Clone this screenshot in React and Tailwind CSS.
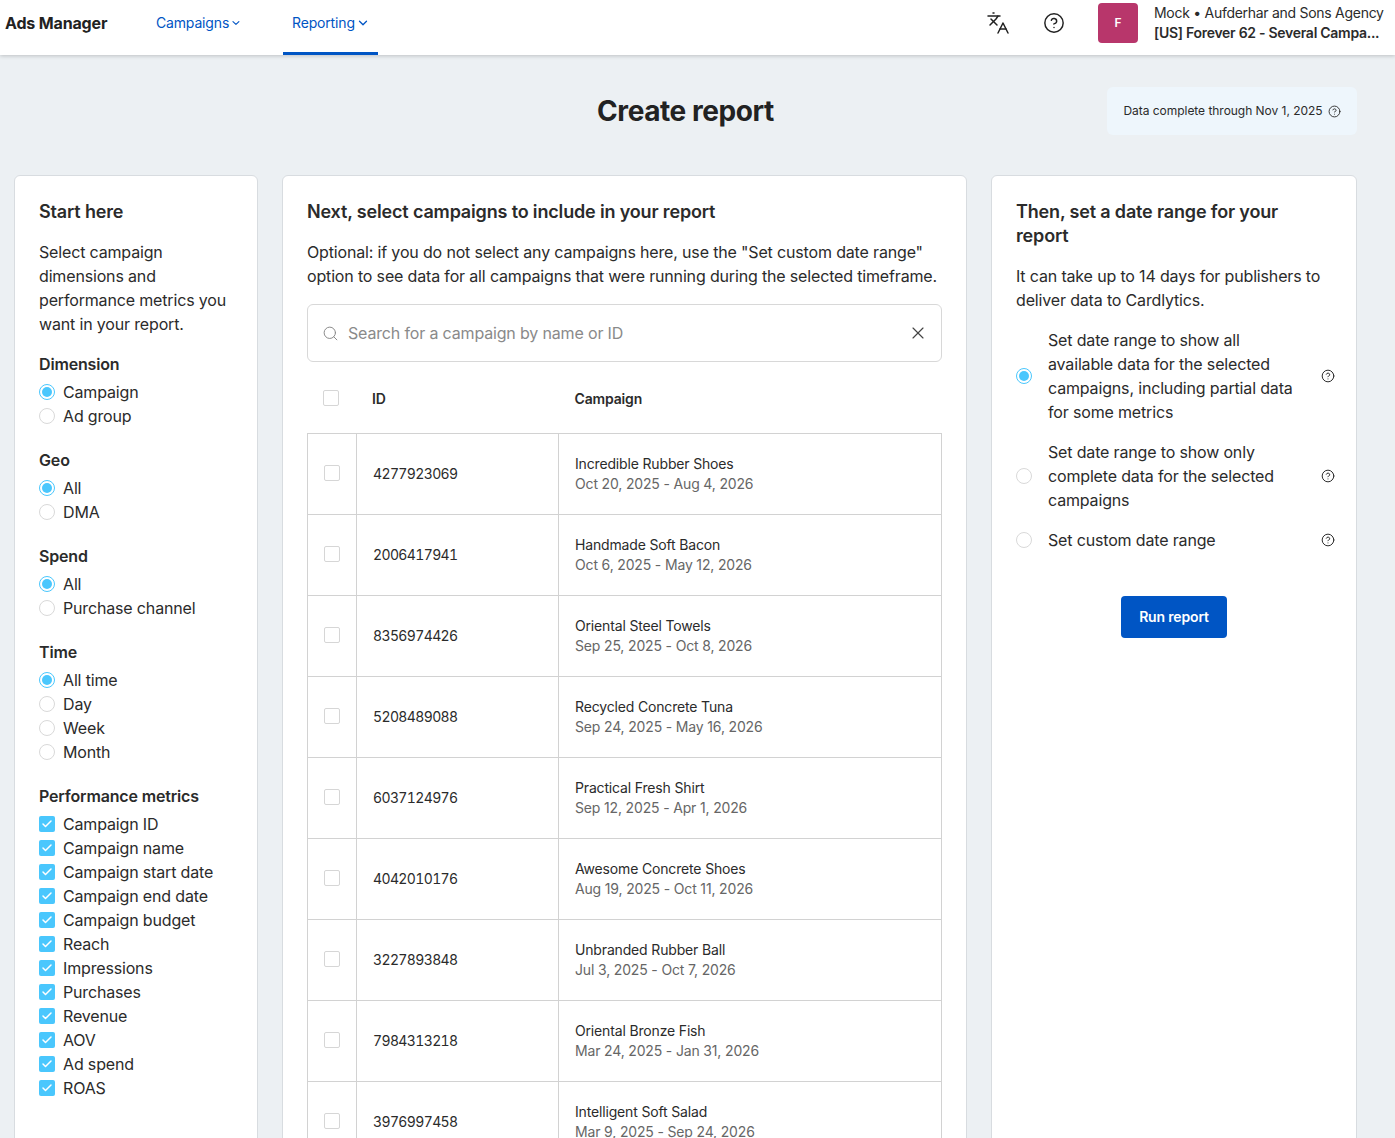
import React from "react";
import { ChevronDown, Languages, CircleHelp, Search, X, Check } from "lucide-react";

const rows = [
  ["4277923069", "Incredible Rubber Shoes", "Oct 20, 2025 - Aug 4, 2026"],
  ["2006417941", "Handmade Soft Bacon", "Oct 6, 2025 - May 12, 2026"],
  ["8356974426", "Oriental Steel Towels", "Sep 25, 2025 - Oct 8, 2026"],
  ["5208489088", "Recycled Concrete Tuna", "Sep 24, 2025 - May 16, 2026"],
  ["6037124976", "Practical Fresh Shirt", "Sep 12, 2025 - Apr 1, 2026"],
  ["4042010176", "Awesome Concrete Shoes", "Aug 19, 2025 - Oct 11, 2026"],
  ["3227893848", "Unbranded Rubber Ball", "Jul 3, 2025 - Oct 7, 2026"],
  ["7984313218", "Oriental Bronze Fish", "Mar 24, 2025 - Jan 31, 2026"],
  ["3976997458", "Intelligent Soft Salad", "Mar 9, 2025 - Sep 24, 2026"],
];

const groups = [
  ["Dimension", ["Campaign", "Ad group"]],
  ["Geo", ["All", "DMA"]],
  ["Spend", ["All", "Purchase channel"]],
  ["Time", ["All time", "Day", "Week", "Month"]],
];

const metrics = ["Campaign ID", "Campaign name", "Campaign start date", "Campaign end date", "Campaign budget", "Reach", "Impressions", "Purchases", "Revenue", "AOV", "Ad spend", "ROAS"];

function Radio({ on }) {
  return (
    <span className={"flex h-4 w-4 shrink-0 items-center justify-center rounded-full border bg-white " + (on ? "border-[#4ac7fd]" : "border-[#d9d9d9]")}>
      {on && <span className="h-[10px] w-[10px] rounded-full bg-[#4ac7fd]" />}
    </span>
  );
}

function Box() {
  return <span className="block h-4 w-4 shrink-0 rounded-[2px] border border-[#d6d6d6] bg-white" />;
}

function Help({ size = 14, className = "" }) {
  return <CircleHelp size={size} strokeWidth={1.7} className={"shrink-0 text-[#2b2b2b] " + className} />;
}

function Tab({ label, active }) {
  return (
    <div className={"flex h-[55px] items-center gap-[1px] whitespace-nowrap text-[14px] text-[#0055c4] " + (active ? "ml-[41px] w-[95px] border-b-[3px] border-[#0055c4] pb-[7px] pl-[9px]" : "ml-[48px] w-[86px] pb-[10px]")}>
      <span>{label}</span>
      <ChevronDown size={14} strokeWidth={2.2} />
    </div>
  );
}

export default function App() {
  return (
    <div className="h-[1138px] overflow-hidden bg-[#ecf0f3] font-['Inter','Liberation_Sans',sans-serif] tracking-[-0.01em] text-[#2b2b2b]">
      <header className="flex h-[55px] items-start bg-white pl-[5px] pr-3 shadow-[0_1px_4px_rgba(0,0,0,0.2)]">
        <div className="mt-[13px] w-[103px] whitespace-nowrap text-[16px] font-bold leading-5 text-[#222]">Ads Manager</div>
        <Tab label="Campaigns" />
        <Tab label="Reporting" active />
        <div className="ml-auto flex items-center pt-[3px]">
          <Languages size={24} strokeWidth={1.5} className="mr-[33px] text-[#222]" />
          <CircleHelp size={22} strokeWidth={1.6} className="mr-[33px] text-[#222]" />
          <div className="mr-4 flex h-10 w-10 items-center justify-center rounded bg-[#b8366b] text-[12px] font-semibold text-white">F</div>
          <div className="w-[229px] whitespace-nowrap text-[14px] leading-5 tracking-[-0.02em]">
            <div>Mock • Aufderhar and Sons Agency</div>
            <div className="font-semibold">[US] Forever 62 - Several Campa...</div>
          </div>
        </div>
      </header>

      <main className="pl-[14px] pr-[38px]">
        <div className="mb-2 grid h-[112px] grid-cols-[1fr_auto_1fr] items-center">
          <div />
          <h1 className="text-[28px] font-bold tracking-[-0.015em] text-[#222]">Create report</h1>
          <div className="flex justify-end">
            <div className="flex h-12 w-[250px] items-center justify-center gap-[5px] rounded-md bg-[#eef6fc] text-[12px] tracking-[-0.003em]">
              Data complete through Nov 1, 2025 <Help size={13} />
            </div>
          </div>
        </div>

        <div className="grid grid-cols-[244px_685px_366px] items-start gap-6">
          <section className="h-[1100px] rounded-md border border-[#d8dce0] bg-white px-6 pt-6">
            <h2 className="mb-4 text-[18px] font-semibold leading-6">Start here</h2>
            <p className="mb-4 text-[16px] leading-6">Select campaign dimensions and performance metrics you want in your report.</p>
            {groups.map(([title, opts]) => (
              <div key={title} className="mb-5">
                <h3 className="mb-1 text-[16px] font-semibold leading-6">{title}</h3>
                {opts.map((o, i) => (
                  <div key={o} className="flex h-6 items-center gap-2 text-[16px]">
                    <Radio on={i === 0} />
                    <span>{o}</span>
                  </div>
                ))}
              </div>
            ))}
            <h3 className="mb-1 text-[16px] font-semibold leading-6">Performance metrics</h3>
            {metrics.map((m) => (
              <div key={m} className="flex h-6 items-center gap-2 text-[16px]">
                <span className="flex h-4 w-4 shrink-0 items-center justify-center rounded-[2px] bg-[#4ac7fd]">
                  <Check size={12} strokeWidth={3} className="text-white" />
                </span>
                <span>{m}</span>
              </div>
            ))}
          </section>

          <section className="h-[1100px] rounded-md border border-[#d8dce0] bg-white px-6 pt-6">
            <h2 className="mb-4 text-[18px] font-semibold leading-6">Next, select campaigns to include in your report</h2>
            <p className="mb-4 whitespace-nowrap text-[16px] leading-6">Optional: if you do not select any campaigns here, use the "Set custom date range"<br />option to see data for all campaigns that were running during the selected timeframe.</p>
            <div className="flex h-[58px] items-center rounded-md border border-[#d8d8d8] pl-[14px] pr-[13px] text-[16px] text-[#8a8a8a]">
              <Search size={17} strokeWidth={1.4} className="mr-[9px]" />
              <span>Search for a campaign by name or ID</span>
              <X size={20} strokeWidth={1.4} className="ml-auto text-[#444]" />
            </div>
            <div className="flex h-[71px] items-center text-[14px] font-semibold">
              <span className="ml-4 w-[49px]"><Box /></span>
              <span className="w-[202.5px] pt-[2px]">ID</span>
              <span className="pt-[2px]">Campaign</span>
            </div>
            <div className="border-t border-l border-r border-[#d2d2d2]">
              {rows.map(([id, name, date]) => (
                <div key={id} className="grid h-[81px] grid-cols-[48px_202px_1fr] border-b border-[#d2d2d2] text-[14px]">
                  <div className="flex items-center pl-4 pb-[2px]"><Box /></div>
                  <div className="flex items-center border-l border-[#d2d2d2] pb-[1px] pl-4 tabular-nums tracking-[-0.045em]">{id}</div>
                  <div className="flex flex-col justify-center border-l border-[#d2d2d2] pl-4 leading-5">
                    <span>{name}</span>
                    <span className="text-[#666]">{date}</span>
                  </div>
                </div>
              ))}
            </div>
          </section>

          <section className="h-[1100px] rounded-md border border-[#d8dce0] bg-white px-6 pt-6">
            <h2 className="mb-4 text-[18px] font-semibold leading-6">Then, set a date range for your report</h2>
            <p className="mb-4 text-[16px] leading-6">It can take up to 14 days for publishers to deliver data to Cardlytics.</p>
            <div className="flex flex-col gap-4 text-[16px] leading-6">
              <div className="flex items-center">
                <Radio on />
                <span className="ml-4 w-[264px] whitespace-nowrap">Set date range to show all<br />available data for the selected<br />campaigns, including partial data<br />for some metrics</span>
                <Help size={14} className="-mr-[3px] ml-auto" />
              </div>
              <div className="flex items-center">
                <Radio />
                <span className="ml-4 w-[264px] whitespace-nowrap">Set date range to show only<br />complete data for the selected<br />campaigns</span>
                <Help size={14} className="-mr-[3px] ml-auto" />
              </div>
              <div className="flex items-center">
                <Radio />
                <span className="ml-4 w-[264px]">Set custom date range</span>
                <Help size={14} className="-mr-[3px] ml-auto" />
              </div>
            </div>
            <div className="mt-[44px] flex justify-center">
              <button className="h-[42px] w-[106px] rounded bg-[#0055c4] pb-[1px] text-[14px] font-semibold text-white">Run report</button>
            </div>
          </section>
        </div>
      </main>
    </div>
  );
}
